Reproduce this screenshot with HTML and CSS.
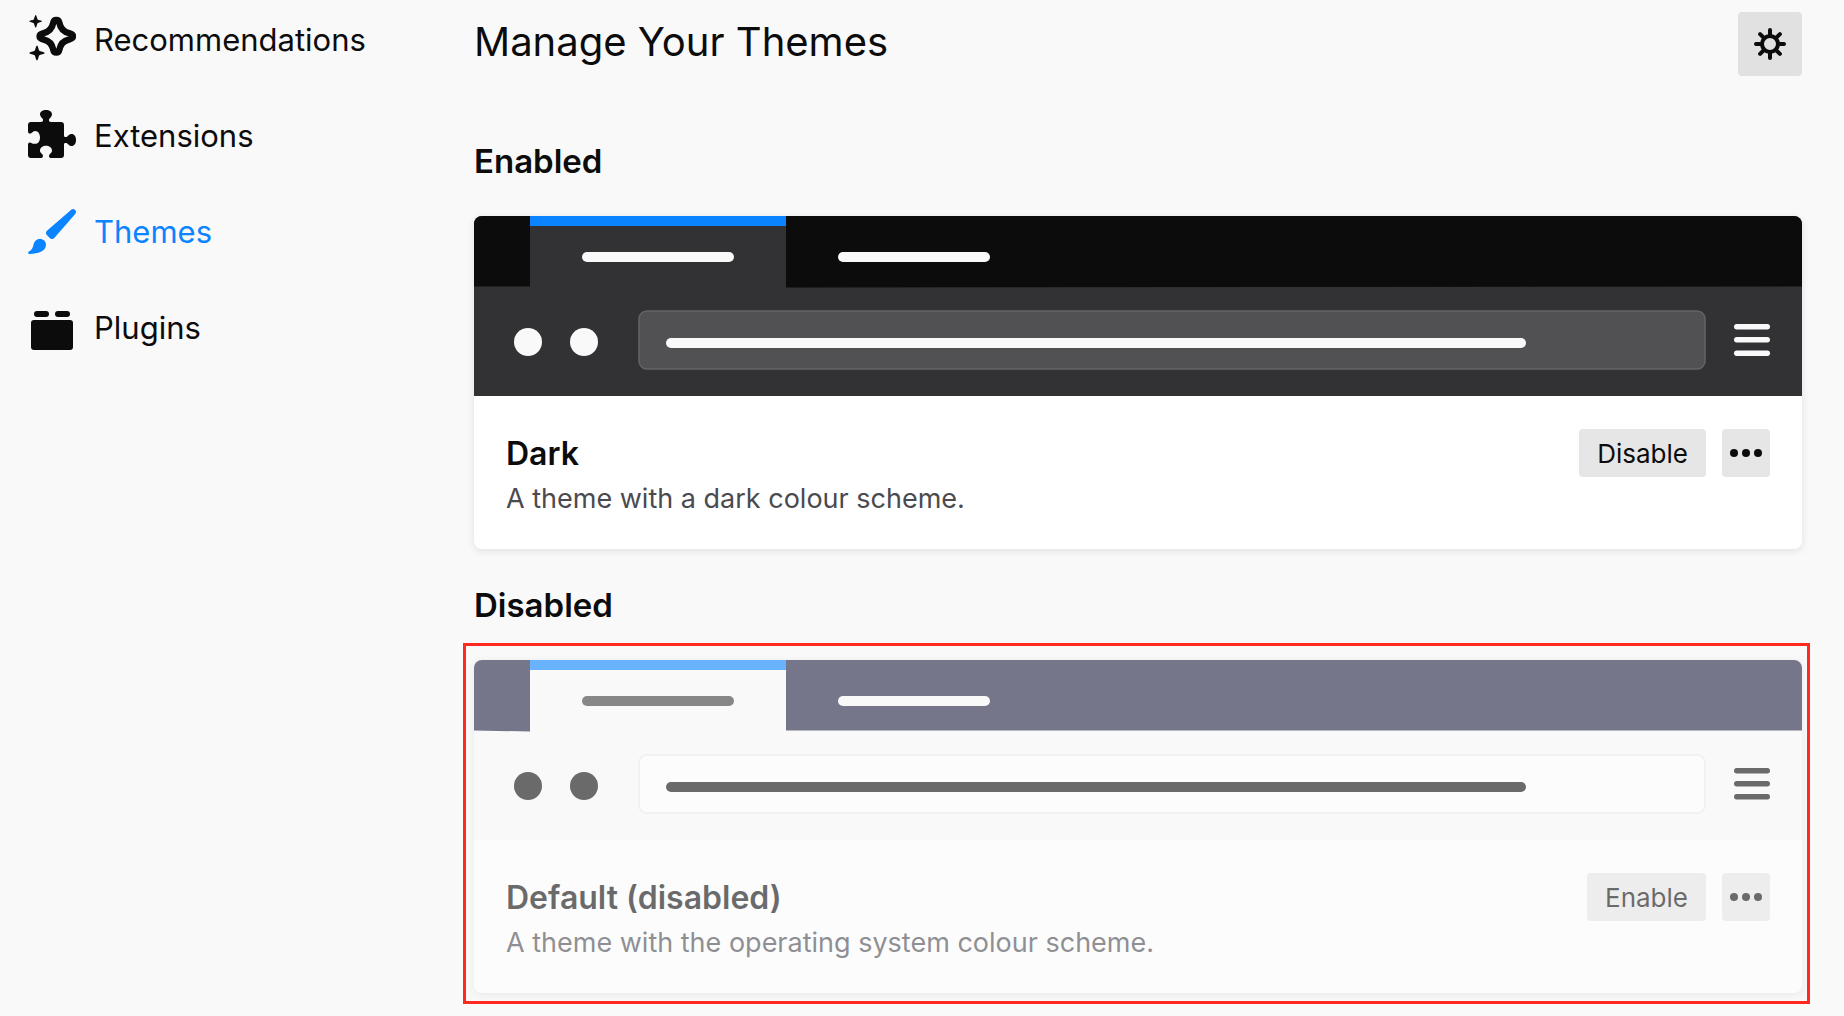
FILE: index.html
```html
<!DOCTYPE html>
<html lang="en-GB">
<head>
<meta charset="utf-8">
<meta name="viewport" content="width=device-width, initial-scale=1">
<title>Manage Your Themes</title>
<link rel="stylesheet" href="styles.css">
</head>
<body>
<div class="page">
  <nav class="sidebar" aria-label="Add-on categories">
    <a class="category" href="#recommendations">
      <svg class="category-icon" viewBox="0 0 48 48" aria-hidden="true">
        <path d="M28.300 6C30.300 6 31 7.200 31.300 8.700C32.500 14.700 35.500 17.900 41 19.100C43.300 19.600 45 20.300 45 22.300C45 24.300 43.300 25 41 25.500C35.500 26.700 32.500 29.900 31.300 35.900C31 37.400 30.300 38.600 28.300 38.600C26.300 38.600 25.600 37.400 25.300 35.900C24.100 29.900 21.100 26.700 15.600 25.500C13.300 25 11.600 24.300 11.600 22.300C11.600 20.300 13.300 19.600 15.600 19.100C21.100 17.900 24.100 14.700 25.300 8.700C25.600 7.200 26.300 6 28.300 6Z" fill="none" stroke="currentColor" stroke-width="6.500"/>
        <path d="M7.700 1C8.600 1 9 5 9.700 5.400C10.200 6 14 6.400 14 7.300C14 8.200 10.200 8.700 9.700 9.300C9 9.800 8.600 13.600 7.700 13.600C6.800 13.600 6.400 9.800 5.700 9.300C5.200 8.700 1.300 8.200 1.300 7.300C1.300 6.400 5.200 6 5.700 5.400C6.400 5 6.800 1 7.700 1Z" fill="currentColor"/>
        <path d="M9 31.600C10 31.600 10.600 36 11.400 36.700C12.100 37.500 16.800 38 16.800 39C16.800 40 12.100 40.500 11.400 41.300C10.600 42 10 46.600 9 46.600C8 46.600 7.400 42 6.600 41.300C5.900 40.500 1.300 40 1.300 39C1.300 38 5.900 37.500 6.600 36.700C7.400 36 8 31.600 9 31.600Z" fill="currentColor"/>
      </svg>
      <span class="category-name">Recommendations</span>
    </a>
    <a class="category" href="#extensions">
      <svg class="category-icon" viewBox="0 0 48 48" aria-hidden="true">
        <path fill="currentColor" d="M3 12H12.500C14.500 12 15.300 11.200 15 9.500C14.700 8.400 12 7 12 4.600C12 1.600 14.500 0 18 0C21.500 0 24 1.600 24 4.600C24 7 21.300 8.400 21 9.500C20.700 11.200 21.500 12 23 12H33Q36 12 36 15V25.500C36 27 37.200 27.300 38.500 27C40 26.600 40.800 24 43.600 24C46.400 24 48 26.500 48 30C48 33.500 46.400 36 43.600 36C40.800 36 40 33.400 38.500 33C37.200 32.700 36 33 36 34.500V45Q36 48 33 48H23.500C20.500 48 20.500 45.500 22 44C23.500 42.500 24 42 24 40.500C24 37.500 21 35.800 18 35.800C15 35.800 12 37.500 12 40.500C12 42 12.500 42.500 14 44C15.500 45.500 15.500 48 12.500 48H3Q0 48 0 45V35C0 32 2 32 3.500 33C5 34 6 33.800 7.500 33.800C10.300 33.800 12 31 12 27.500C12 23.800 10 21 7.200 21C5.500 21 5 21.800 3.500 23C2 24 0 24 0 21V15Q0 12 3 12Z"/>
      </svg>
      <span class="category-name">Extensions</span>
    </a>
    <a class="category category-selected" href="#themes" aria-current="page">
      <svg class="category-icon" viewBox="0 0 48 48" aria-hidden="true">
        <path fill="currentColor" d="M43.500 3.500Q45.500 2.300 47.200 4Q48.800 6 47.200 8L26.500 31.800Q24.300 34.200 22 32.200L18.800 29Q16.800 26.500 19.500 24.200Z"/>
        <path fill="currentColor" d="M12 33C15.500 33 18 35.300 18 38.800C18 45.500 9.500 48 1.500 47.900C-.2 47.800-.4 46 1 45.400C3.300 44.400 4.500 42.500 5.300 39.500C6.200 35.500 8 33 12 33Z"/>
      </svg>
      <span class="category-name">Themes</span>
    </a>
    <a class="category" href="#plugins">
      <svg class="category-icon" viewBox="0 0 48 48" aria-hidden="true" fill="currentColor">
        <rect x="6" y="9" width="15" height="6" rx="3"/>
        <rect x="27" y="9" width="15" height="6" rx="3"/>
        <rect x="3" y="18" width="42" height="30" rx="3"/>
      </svg>
      <span class="category-name">Plugins</span>
    </a>
  </nav>

  <main class="main">
    <header class="page-header">
      <h1 class="page-title">Manage Your Themes</h1>
      <button class="settings-button" type="button" aria-label="Tools for all add-ons">
        <svg class="settings-icon" viewBox="0 0 32 32" aria-hidden="true" fill="none" stroke="currentColor" stroke-width="4" stroke-linecap="round">
          <circle cx="16" cy="16" r="8"/>
          <path d="M16 2V8M16 24V30M2 16H8M24 16H30M6.100 6.100L10 10M22 22L25.900 25.900M6.100 25.900L10 22M22 10L25.900 6.100"/>
        </svg>
      </button>
    </header>

    <section>
      <h2 class="section-title">Enabled</h2>
      <article class="card">
        <svg class="preview" viewBox="0 0 1328 180" aria-hidden="true">
          <rect width="1328" height="180" fill="#323234"/>
          <path d="M0 0H56V70.500H0ZM312 0H1328V70.500L312 71.500Z" fill="#0c0c0d"/>
          <rect x="56" width="256" height="10" fill="#0a84ff"/>
          <g fill="#f9f9fa">
            <rect x="108" y="36" width="152" height="10" rx="5"/>
            <rect x="364" y="36" width="152" height="10" rx="5"/>
            <circle cx="54" cy="126" r="14"/>
            <circle cx="110" cy="126" r="14"/>
          </g>
          <rect x="165" y="95" width="1066" height="58" rx="8" fill="#515153" stroke="#646466" stroke-width="1.500"/>
          <g fill="#f9f9fa">
            <rect x="192" y="122" width="860" height="10" rx="5"/>
            <rect x="1260" y="108" width="36" height="5.500" rx="2.750"/>
            <rect x="1260" y="121" width="36" height="5.500" rx="2.750"/>
            <rect x="1260" y="134.500" width="36" height="5.500" rx="2.750"/>
          </g>
        </svg>
        <div class="card-body">
          <div class="card-text">
            <h3 class="card-name">Dark</h3>
            <p class="card-description">A theme with a dark colour scheme.</p>
          </div>
          <div class="card-actions">
            <button class="button" type="button">Disable</button>
            <button class="button button-more" type="button" aria-label="More options">
              <svg class="more-icon" viewBox="0 0 32 8" aria-hidden="true" fill="currentColor"><circle cx="4" cy="4" r="4"/><circle cx="16" cy="4" r="4"/><circle cx="28" cy="4" r="4"/></svg>
            </button>
          </div>
        </div>
      </article>
    </section>

    <section>
      <h2 class="section-title">Disabled</h2>
      <div class="highlight">
        <article class="card card-disabled">
          <svg class="preview" viewBox="0 0 1328 180" aria-hidden="true">
            <rect width="1328" height="180" fill="#f9f9fa"/>
            <path d="M0 0H56V71.500L0 70.500ZM312 0H1328V70.500H312Z" fill="#202040"/>
            <rect x="56" width="256" height="10" fill="#0a84ff"/>
            <rect x="108" y="36" width="152" height="10" rx="5" fill="#3d3d3d"/>
            <rect x="364" y="36" width="152" height="10" rx="5" fill="#f9f9fa"/>
            <rect x="165" y="95" width="1066" height="58" rx="8" fill="#fff" stroke="#ececec" stroke-width="2"/>
            <g fill="#0c0c0d">
              <circle cx="54" cy="126" r="14"/>
              <circle cx="110" cy="126" r="14"/>
              <rect x="192" y="122" width="860" height="10" rx="5"/>
              <rect x="1260" y="108" width="36" height="5.500" rx="2.750"/>
              <rect x="1260" y="121" width="36" height="5.500" rx="2.750"/>
              <rect x="1260" y="134" width="36" height="5.500" rx="2.750"/>
            </g>
          </svg>
          <div class="card-body">
            <div class="card-text">
              <h3 class="card-name">Default (disabled)</h3>
              <p class="card-description">A theme with the operating system colour scheme.</p>
            </div>
            <div class="card-actions">
              <button class="button" type="button">Enable</button>
              <button class="button button-more" type="button" aria-label="More options">
                <svg class="more-icon" viewBox="0 0 32 8" aria-hidden="true" fill="currentColor"><circle cx="4" cy="4" r="4"/><circle cx="16" cy="4" r="4"/><circle cx="28" cy="4" r="4"/></svg>
              </button>
            </div>
          </div>
        </article>
      </div>
    </section>
  </main>
</div>
</body>
</html>
```
FILE: styles.css
```css
* {
  box-sizing: border-box;
}

body {
  margin: 0;
  background: #f9f9fa;
  color: #0c0c0d;
  font-family: Inter, "Liberation Sans", sans-serif;
}

h1,
h2,
h3,
p {
  margin: 0;
}

.page {
  display: grid;
  grid-template-columns: 432px minmax(0, 1fr);
  column-gap: 42px;
  padding: 12px 42px 12px 0;
}

.sidebar {
  display: flex;
  flex-direction: column;
  gap: 48px;
  padding: 2px 0 0 28px;
}

.category {
  display: flex;
  align-items: center;
  gap: 18px;
  height: 48px;
  color: inherit;
  font-size: 31px;
  line-height: 40px;
  text-decoration: none;
}

.category-icon {
  flex: none;
  width: 48px;
  height: 48px;
}

.category-name {
  padding-top: 3px;
}

.category-selected {
  color: #0a84ff;
}

.page-header {
  display: flex;
  align-items: flex-start;
  justify-content: space-between;
  min-height: 64px;
  margin-bottom: 65px;
}

.page-title {
  font-size: 40px;
  font-weight: 400;
  line-height: 60px;
}

.settings-button {
  display: grid;
  place-items: center;
  width: 64px;
  height: 64px;
  padding: 0;
  border: 0;
  border-radius: 4px;
  background: #e1e1e2;
  color: inherit;
}

.settings-icon {
  width: 32px;
  height: 32px;
}

.section-title {
  margin-bottom: 35px;
  font-size: 33px;
  font-weight: 600;
  line-height: 40px;
}

.card {
  margin-bottom: 36px;
  overflow: hidden;
  border-radius: 8px;
  background: #fff;
  box-shadow: 0 2px 8px rgba(12, 12, 13, 0.1);
}

.card-disabled {
  margin-bottom: 0;
  opacity: 0.6;
}

.preview {
  display: block;
  width: 100%;
  height: auto;
}

.card-body {
  display: flex;
  align-items: flex-start;
  justify-content: space-between;
  gap: 16px;
  padding: 33px 32px 30px;
}

.card-name {
  font-size: 32px;
  font-weight: 600;
  line-height: 50px;
}

.card-description {
  color: #4a4a4f;
  font-size: 27px;
  line-height: 40px;
}

.card-actions {
  display: flex;
  gap: 16px;
}

.button {
  height: 48px;
  padding: 0 18px;
  border: 0;
  border-radius: 4px;
  background: #e6e6e6;
  color: inherit;
  font-family: inherit;
  font-size: 26px;
}

.button-more {
  display: grid;
  place-items: center;
  width: 48px;
  padding: 0;
}

.more-icon {
  width: 32px;
  height: 8px;
}

/* Frame that calls attention to the disabled theme */
.highlight {
  margin: -17px -8px 0 -11px;
  padding: 14px 5px 8px 8px;
  border: 3px solid #ff2a1f;
}
```
